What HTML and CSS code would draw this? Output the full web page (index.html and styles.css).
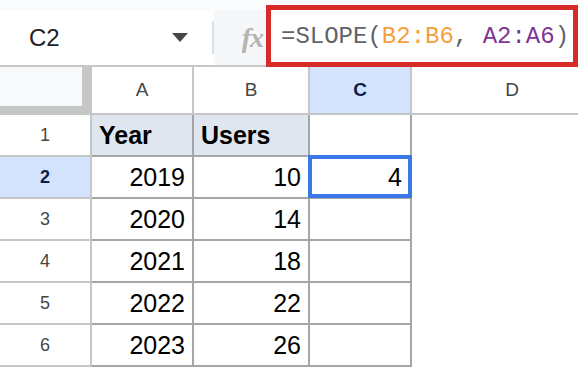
FILE: index.html
```html
<!DOCTYPE html>
<html>
<head>
    <title>SLOPE formula</title>
    <link rel="stylesheet" href="styles.css">
</head>
<body>
    <div class="toolbar">
        <div class="namebox">
            <span class="cellref">C2</span>
            <span class="caret"></span>
            <span class="divider"></span>
        </div>
        <div class="fxbox"><span class="fx">fx</span></div>
        <div class="formula">
            <span class="fn">=SLOPE(</span><span class="ref-b">B2:B6</span><span class="fn">, </span><span class="ref-a">A2:A6</span><span class="fn">)</span>
        </div>
    </div>

    <div class="sheet">
        <div class="corner"></div>
        <div class="colhead">A</div>
        <div class="colhead">B</div>
        <div class="colhead active">C</div>
        <div class="colhead last">D</div>

        <div class="rowhead">1</div>
        <div class="cell label">Year</div>
        <div class="cell label">Users</div>
        <div class="cell"></div>
        <div class="blank"></div>

        <div class="rowhead active">2</div>
        <div class="cell num">2019</div>
        <div class="cell num">10</div>
        <div class="cell num selected">4</div>
        <div class="blank"></div>

        <div class="rowhead">3</div>
        <div class="cell num">2020</div>
        <div class="cell num">14</div>
        <div class="cell"></div>
        <div class="blank"></div>

        <div class="rowhead">4</div>
        <div class="cell num">2021</div>
        <div class="cell num">18</div>
        <div class="cell"></div>
        <div class="blank"></div>

        <div class="rowhead">5</div>
        <div class="cell num">2022</div>
        <div class="cell num">22</div>
        <div class="cell"></div>
        <div class="blank"></div>

        <div class="rowhead">6</div>
        <div class="cell num">2023</div>
        <div class="cell num">26</div>
        <div class="cell"></div>
        <div class="blank"></div>
    </div>
</body>
</html>
```

FILE: styles.css
```css
* {
    box-sizing: border-box;
}
body {
    margin: 0;
    width: 578px;
    height: 374px;
    overflow: hidden;
    background: white;
    font-family: "Liberation Sans", Arial, sans-serif;
}
.toolbar {
    display: flex;
    align-items: flex-start;
    height: 67px;
    background: #f9fbfd;
}
.namebox {
    display: flex;
    align-items: center;
    width: 214px;
    height: 57px;
    margin-top: 10px;
    padding-left: 29px;
    background: white;
    border-bottom: 2px solid #c7c7c7;
}
.cellref {
    flex: 1;
    font-size: 24px;
    color: #202124;
}
.caret {
    width: 0;
    height: 0;
    border-left: 8px solid transparent;
    border-right: 8px solid transparent;
    border-top: 9px solid #444746;
    margin-right: 24px;
}
.divider {
    width: 2px;
    height: 33px;
    background: #d3e1f2;
}
.fxbox {
    display: flex;
    align-items: center;
    justify-content: flex-end;
    width: 52px;
    height: 57px;
    margin-top: 10px;
    padding-right: 3px;
    background: #f6f7f8;
    border-bottom: 2px solid #c7c7c7;
}
.fx {
    font-family: "Liberation Serif", serif;
    font-style: italic;
    font-weight: bold;
    font-size: 28px;
    color: #b4b4b4;
    letter-spacing: -1px;
}
.formula {
    display: flex;
    align-items: center;
    width: 312px;
    height: 62px;
    margin-top: 5px;
    padding-left: 10px;
    background: white;
    border: 5px solid #d92a2a;
    font-family: "Liberation Mono", monospace;
    font-size: 24px;
    white-space: pre;
    overflow: hidden;
}
.fn {
    color: #5f6368;
}
.ref-b {
    color: #f5a03c;
}
.ref-a {
    color: #7e3596;
}
.sheet {
    display: grid;
    grid-template-columns: 92px 102px 116px 102px 1fr;
    grid-template-rows: 48px repeat(6, 42px);
}
.corner {
    background: #f8f9fa;
    border-right: 10px solid #c4c7c5;
    border-bottom: 9px solid #c4c7c5;
}
.colhead {
    display: flex;
    align-items: center;
    justify-content: center;
    font-size: 19px;
    color: #444746;
    border-right: 2px solid #c4c7c5;
    border-bottom: 2px solid #c4c7c5;
}
.colhead.last {
    border-right: none;
    padding-left: 34px;
}
.colhead.active {
    background: #d3e3fd;
    color: #0b1e45;
    font-weight: bold;
}
.rowhead {
    display: flex;
    align-items: center;
    justify-content: center;
    font-size: 18px;
    color: #444746;
    border-right: 2px solid #c4c7c5;
    border-bottom: 2px solid #c4c7c5;
}
.rowhead.active {
    background: #d3e3fd;
    color: #0b1e45;
    font-weight: bold;
}
.cell {
    display: flex;
    align-items: center;
    padding: 0 7px;
    font-size: 25px;
    color: black;
    border-right: 2px solid #a6a6a6;
    border-bottom: 2px solid #a6a6a6;
}
.cell.label {
    background: #dfe6ef;
    font-weight: bold;
}
.cell.num {
    justify-content: flex-end;
}
.cell.selected {
    position: relative;
    padding-right: 8px;
}
.cell.selected::after {
    content: "";
    position: absolute;
    top: -2px;
    left: -2px;
    right: -2px;
    bottom: -1px;
    border: 4px solid #3b78e7;
}
```
